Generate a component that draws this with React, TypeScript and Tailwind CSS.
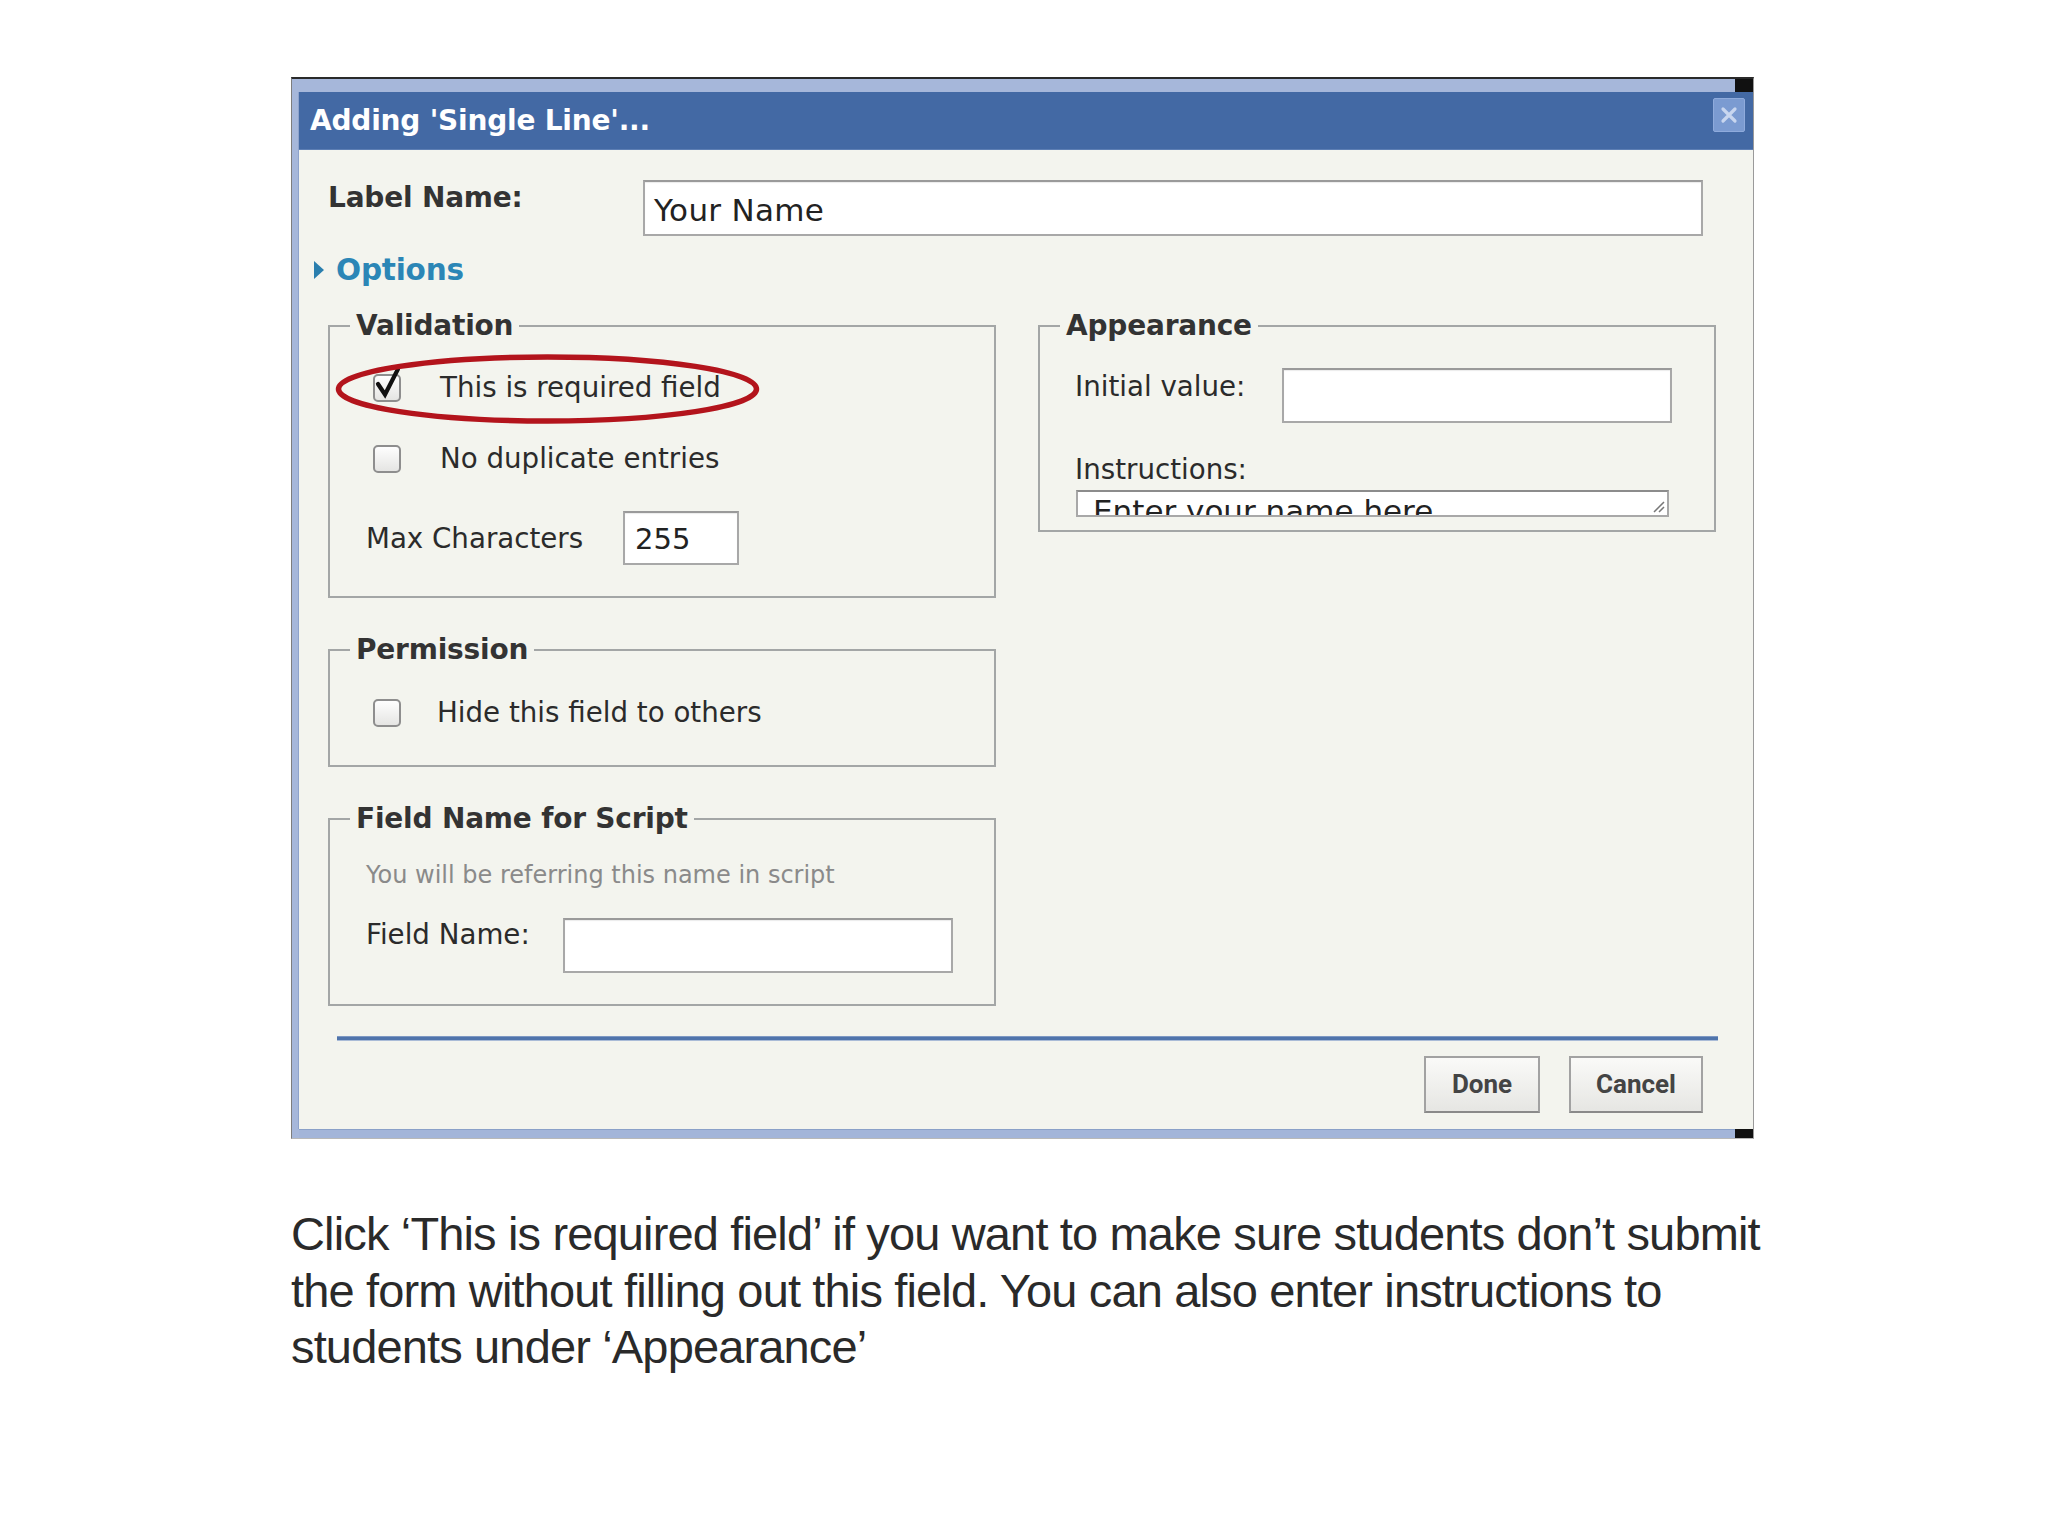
import React from "react";

function CheckBox({ checked }: { checked?: boolean }) {
  return (
    <svg width="28" height="28" viewBox="0 0 28 28" className="shrink-0 overflow-visible">
      <defs>
        <linearGradient id="cbg" x1="0" y1="0" x2="0" y2="1">
          <stop offset="0" stopColor="#ffffff" />
          <stop offset="1" stopColor="#e4e4e2" />
        </linearGradient>
      </defs>
      <rect x="1" y="1" width="26" height="26" rx="4" fill="url(#cbg)" stroke="#8e8e8e" strokeWidth="2" />
      {checked && (
        <path d="M5 10 L12 20.5 L25 -5" fill="none" stroke="#111" strokeWidth="4.2" strokeLinecap="round" strokeLinejoin="miter" />
      )}
    </svg>
  );
}

function Input({ className, children }: { className: string; children?: React.ReactNode }) {
  return (
    <div
      className={
        "bg-white border-2 border-[#a8a8a8] border-t-[#9a9a9a] shadow-[inset_0_1px_1px_rgba(0,0,0,0.08)] flex items-center " +
        className
      }
    >
      {children}
    </div>
  );
}

const ui = "font-['DejaVu_Sans',sans-serif]";

export default function App() {
  return (
    <div className="w-[2048px] h-[1536px] bg-white overflow-hidden">
      <div className="pt-[77px] pl-[291px]">
        {/* Dialog */}
        <div className="w-[1463px] flex flex-col border-l border-[#7d7d7d] border-r border-r-[#9a9a9a] border-t-2 border-t-[#2a2a2a] border-b border-b-[#b8b8b8]">
          {/* top band */}
          <div className="flex h-[13px]">
            <div className="flex-1 bg-[#a6b7da]" />
            <div className="w-[18px] bg-[#111]" />
          </div>
          <div className="flex">
            <div className="w-[7px] bg-[#a6b7da] border-r border-[#8ea3cc]" />
            <div className="flex-1 flex flex-col">
              {/* title bar */}
              <div className="h-[58px] bg-[#4369a4] flex items-start justify-between pl-[11px] pr-[8px] border-b border-[#5d7fb4]">
                <div className={"text-white font-bold text-[28px] leading-[34px] pt-[12px] tracking-[-0.2px] " + ui}>
                  Adding 'Single Line'...
                </div>
                <div className="mt-[6px] w-[32px] h-[34px] bg-[#7b9bd1] border border-[#8fabdc] rounded-[2px] flex items-center justify-center">
                  <svg width="18" height="18" viewBox="0 0 18 18">
                    <path d="M3 3 L15 15 M15 3 L3 15" stroke="#c8d6ef" strokeWidth="3.2" strokeLinecap="round" />
                  </svg>
                </div>
              </div>
              {/* body */}
              <div className={"h-[979px] bg-[#f3f4ee] pl-[29px] text-[#2b2b2b] " + ui}>
                {/* Label row */}
                <div className="flex items-start pt-[30px]">
                  <div className="w-[315px] font-bold text-[28px] leading-[36px] text-[#333] tracking-[-0.2px]">Label Name:</div>
                  <Input className="w-[1060px] h-[56px] pl-[9px]">
                    <span className="text-[31px] leading-[36px] text-[#222] tracking-[0.3px] pt-[4px]">Your Name</span>
                  </Input>
                </div>
                {/* Options */}
                <div className="flex items-center mt-[16px] ml-[-15px] h-[36px]">
                  <svg width="12" height="20" viewBox="0 0 12 20" className="mr-[11px]">
                    <path d="M1 1 L11 10 L1 19 Z" fill="#2a7fae" />
                  </svg>
                  <span className="text-[29.5px] font-bold text-[#2b86b6] leading-[36px] tracking-[-0.2px]">Options</span>
                </div>
                {/* columns */}
                <div className="flex items-start gap-[42px] mt-[21px]">
                  {/* left column */}
                  <div className="w-[668px] flex flex-col">
                    {/* Validation */}
                    <fieldset className="relative border-2 border-[#a3a6a6] m-0 px-0 pb-[31px]">
                      <legend className="ml-[20px] px-[6px] font-bold text-[28px] leading-[34px] text-[#333] tracking-[-0.2px]">Validation</legend>
                      <svg className="absolute left-[6px] top-[12px] overflow-visible" width="423" height="68" viewBox="0 0 423 68">
                        <ellipse cx="211.5" cy="34" rx="209" ry="32" fill="none" stroke="#b3141c" strokeWidth="5.5" />
                      </svg>
                      <div className="pl-[43px] pt-[18px] flex items-center h-[72px]">
                        <CheckBox checked />
                        <span className="ml-[39px] text-[27.7px] leading-[34px]">This is required field</span>
                      </div>
                      <div className="pl-[43px] mt-[17px] flex items-center h-[54px]">
                        <CheckBox />
                        <span className="ml-[39px] text-[27.7px] leading-[34px]">No duplicate entries</span>
                      </div>
                      <div className="pl-[36px] mt-[25px] flex items-center h-[54px]">
                        <span className="w-[257px] text-[27.7px] leading-[34px] pt-[2px]">Max Characters</span>
                        <Input className="w-[116px] h-[54px] pl-[10px]">
                          <span className="text-[29px] leading-[34px] text-[#222] pt-[2px]">255</span>
                        </Input>
                      </div>
                    </fieldset>
                    {/* Permission */}
                    <fieldset className="border-2 border-[#a3a6a6] m-0 px-0 pb-[25px] mt-[35px]">
                      <legend className="ml-[20px] px-[6px] font-bold text-[28px] leading-[34px] text-[#333] tracking-[-0.2px]">Permission</legend>
                      <div className="pl-[43px] mt-[19px] flex items-center h-[54px]">
                        <CheckBox />
                        <span className="ml-[36px] text-[27.7px] leading-[34px]">Hide this field to others</span>
                      </div>
                    </fieldset>
                    {/* Field Name for Script */}
                    <fieldset className="border-2 border-[#a3a6a6] m-0 px-0 pb-[31px] mt-[35px]">
                      <legend className="ml-[20px] px-[6px] font-bold text-[28px] leading-[34px] text-[#333] tracking-[-0.2px]">Field Name for Script</legend>
                      <div className="pl-[36px] mt-[24px] text-[24px] leading-[30px] text-[#8a8a8a]">You will be referring this name in script</div>
                      <div className="pl-[36px] mt-[28px] flex items-start">
                        <span className="w-[197px] text-[27.7px] leading-[34px]">Field Name:</span>
                        <Input className="w-[390px] h-[55px]" />
                      </div>
                    </fieldset>
                  </div>
                  {/* right column */}
                  <div className="w-[678px]">
                    <fieldset className="border-2 border-[#a3a6a6] m-0 px-0 pb-[13px]">
                      <legend className="ml-[20px] px-[6px] font-bold text-[28px] leading-[34px] text-[#333] tracking-[-0.2px]">Appearance</legend>
                      <div className="pl-[35px] mt-[25px] flex items-start">
                        <span className="w-[207px] text-[27.7px] leading-[34px] pt-[2px]">Initial value:</span>
                        <Input className="w-[390px] h-[55px]" />
                      </div>
                      <div className="pl-[35px] mt-[31px] text-[27.7px] leading-[32px]">Instructions:</div>
                      <div className="ml-[36px] mt-[4px] w-[593px] h-[27px] bg-white border-2 border-[#a8a8a8] border-t-[#8c8c8c] overflow-hidden relative">
                        <div className="pl-[15px] pt-[1px] text-[31px] leading-[36px] text-[#222]">Enter your name here</div>
                        <svg className="absolute right-[2px] bottom-[2px]" width="14" height="14" viewBox="0 0 14 14">
                          <path d="M13 3 L3 13 M13 8 L8 13" stroke="#777" strokeWidth="1.5" />
                        </svg>
                      </div>
                    </fieldset>
                  </div>
                </div>
                {/* separator */}
                <div className="ml-[9px] mt-[30px] w-[1381px] h-[5px] bg-[#4f74ab] border-t border-[#7d98c2] border-b border-b-[#a9bbd7]" />
                {/* buttons */}
                <div className="flex justify-end gap-[29px] pr-[50px] mt-[15px]">
                  <button className="w-[116px] h-[57px] border-2 border-[#a2a2a2] border-b-[#8a8a8a] bg-gradient-to-b from-[#fafaf8] to-[#e6e6e3] font-['Roboto',sans-serif] font-bold text-[26px] text-[#444]">
                    Done
                  </button>
                  <button className="w-[134px] h-[57px] border-2 border-[#a2a2a2] border-b-[#8a8a8a] bg-gradient-to-b from-[#fafaf8] to-[#e6e6e3] font-['Roboto',sans-serif] font-bold text-[26px] text-[#444]">
                    Cancel
                  </button>
                </div>
              </div>
            </div>
          </div>
          {/* bottom band */}
          <div className="flex h-[9px]">
            <div className="w-[7px] bg-[#a6b7da]" />
            <div className="flex-1 bg-[#a3b5d9] border-t border-[#8aa0c8]" />
            <div className="w-[18px] bg-[#111]" />
          </div>
        </div>
        {/* caption */}
        <div className="mt-[67px] font-['Liberation_Sans',Arial,sans-serif] font-light text-[47px] leading-[56.5px] text-[#2a2a2a] tracking-[-0.85px] whitespace-nowrap">
          Click ‘This is required field’ if you want to make sure students don’t submit
          <br />
          the form without filling out this field. You can also enter instructions to
          <br />
          students under ‘Appearance’
        </div>
      </div>
    </div>
  );
}
